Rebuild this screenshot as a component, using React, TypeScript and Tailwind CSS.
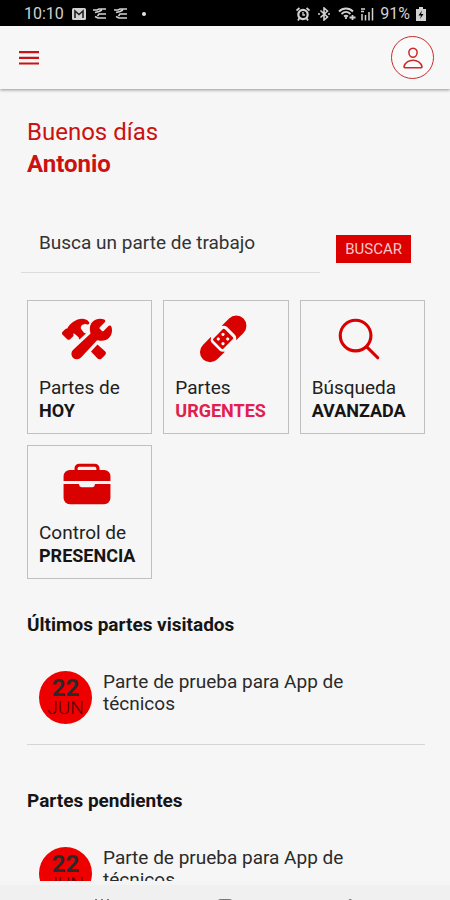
import React from 'react';
import {
    IoBandage,
    IoBriefcase,
    IoConstruct,
    IoPersonOutline,
    IoSearchOutline,
} from 'react-icons/io5';

interface Shortcut {
    id: string;
    icon: React.ReactNode;
    label: string;
    strong: string;
    urgent?: boolean;
}

interface WorkOrder {
    day: string;
    month: string;
    title: string;
}

const shortcuts: Shortcut[] = [
    { id: 'today', icon: <IoConstruct />, label: 'Partes de', strong: 'HOY' },
    { id: 'urgent', icon: <IoBandage />, label: 'Partes', strong: 'URGENTES', urgent: true },
    { id: 'search', icon: <IoSearchOutline />, label: 'Búsqueda', strong: 'AVANZADA' },
    { id: 'presence', icon: <IoBriefcase />, label: 'Control de', strong: 'PRESENCIA' },
];

const visited: WorkOrder[] = [
    { day: '22', month: 'JUN', title: 'Parte de prueba para App de técnicos' },
];

const pending: WorkOrder[] = [
    { day: '22', month: 'JUN', title: 'Parte de prueba para App de técnicos' },
];

const TransferIcon: React.FC = () => (
    <svg viewBox="0 0 15 14" className="h-3.5 w-[15px]" fill="none" stroke="currentColor" strokeWidth="1.6">
        <path d="M1 3h4l2-1h7M3 5.500l4-1 3-1.500M14 7H7L5.500 9M3 9.500l3 1.500h8" />
    </svg>
);

const StatusBar: React.FC = () => (
    <div className="flex h-[26px] shrink-0 items-center justify-between bg-black px-6 pt-0.5 text-base text-[#d2d2d2]">
        <div className="flex items-center gap-1.5">
            <span className="mr-0.5">10:10</span>
            <svg viewBox="0 0 14 12" className="h-3 w-3.5">
                <rect width="14" height="12" rx="1.500" fill="#d2d2d2" />
                <path d="M3 10V3l4 3.500L11 3v7" fill="none" stroke="#222" strokeWidth="1.600" />
            </svg>
            <TransferIcon />
            <TransferIcon />
            <span className="ml-2 size-1 rounded-full bg-[#e4e4e4]" />
        </div>
        <div className="flex items-center gap-1">
            <svg viewBox="0 0 14 14" className="mr-1 size-3.5" fill="none" stroke="currentColor">
                <circle cx="7" cy="7.500" r="4.700" strokeWidth="2.200" />
                <path d="M0.500 3.500L3.500 1M13.500 3.500L10.500 1M3.500 11L2 13.500M10.500 11L12 13.500" strokeWidth="1.800" />
                <path d="M7 5v3h2" strokeWidth="1.300" />
            </svg>
            <svg viewBox="0 0 12 14" className="mr-1 h-3.5 w-3" fill="none" stroke="currentColor" strokeWidth="1.600">
                <path d="M2.500 3.500l7 6.500L6 13V1l3.500 3-7 6.500" />
                <path d="M0 7h2M10 7h2" />
            </svg>
            <svg viewBox="0 0 18 16" className="h-4 w-[18px]" fill="none" stroke="currentColor" strokeWidth="1.800">
                <path d="M1 5.500C5 1.500 11 1.500 15 5.500M3.500 8C6.500 5.200 9.500 5.200 12.500 8M6 10.500c1.500-1.200 2.500-1.200 4 0" />
                <path d="M8 11v2M11.500 11.500h6M14.500 9v5" />
            </svg>
            <svg viewBox="0 0 14 14" className="size-3.5" fill="none" stroke="currentColor" strokeWidth="1.500">
                <path d="M2 7v6.500M5.500 8v5.500M9 5v8.500M12.500 1v12.500M1 2h4M1 4.500h3" />
            </svg>
            <span className="mx-0.5">91%</span>
            <svg viewBox="0 0 10 14" className="h-3.5 w-2.5">
                <path d="M3 0h4v2h3v12H0V2h3z" fill="currentColor" />
                <path d="M6 3.500L2.500 8.500H5L4 12l3.500-5H5z" fill="#000" />
            </svg>
        </div>
    </div>
);

const Header: React.FC = () => (
    <header className="z-10 flex h-[63px] shrink-0 items-center justify-between bg-[#f7f7f7] pr-4 pl-[19px] shadow-[0_1px_3px_rgba(0,0,0,0.4)]">
        <button type="button" aria-label="Menú" className="text-[#c81414]">
            <svg viewBox="0 0 20 14" className="h-3.5 w-5" fill="currentColor">
                <path d="M0 0h20v2.200H0zM0 5.700h20v2.200H0zM0 11.400h20v2.200H0z" />
            </svg>
        </button>
        <button
            type="button"
            aria-label="Perfil"
            className="flex size-[43px] items-center justify-center rounded-full border border-[#c92a2a] bg-[#fafafa] text-[#c92a2a]"
        >
            <IoPersonOutline className="size-6" />
        </button>
    </header>
);

const ShortcutCard: React.FC<{ item: Shortcut }> = ({ item }) => (
    <button type="button" className="border border-[#c0c0c0] px-[11px] pt-[13px] pb-[11px] text-left text-[#222]">
        <span className="mb-3 flex justify-center pr-1.5 text-[50px] text-[#d90000]">{item.icon}</span>
        <span className="block text-[19px] leading-[23px]">{item.label}</span>
        <span
            className={`block text-lg leading-[23px] font-bold ${item.urgent ? 'text-[#e0204f]' : 'text-[#151515]'}`}
        >
            {item.strong}
        </span>
    </button>
);

const OrderSection: React.FC<{ title: string; orders: WorkOrder[] }> = ({ title, orders }) => (
    <section className="mb-11">
        <h2 className="mb-[34px] text-[19px] leading-6 font-bold text-[#151515]">{title}</h2>
        {orders.map((order, index) => (
            <a
                key={index}
                href="#parte"
                className="flex items-start gap-[11px] border-b border-[#d5d5d5] pb-5 pl-3 text-[#2a2a2a]"
            >
                <span className="flex size-[53px] shrink-0 flex-col items-center justify-center rounded-full bg-[#ee0000]">
                    <span className="text-2xl leading-5 font-bold">{order.day}</span>
                    <span className="text-[19px] leading-5 font-light text-[#4a0808]">{order.month}</span>
                </span>
                <span className="max-w-[260px] text-[19px] leading-[22px]">{order.title}</span>
            </a>
        ))}
    </section>
);

const App: React.FC = () => {
    return (
        <div className="flex h-screen flex-col bg-[#f6f6f6] font-[Roboto,sans-serif]">
            <StatusBar />
            <Header />
            <main className="min-h-0 flex-1 overflow-y-auto pt-[27px] pr-[25px] pl-[27px] [scrollbar-width:none]">
                <h1 className="text-2xl leading-8 text-[#cc1111]">
                    Buenos días
                    <strong className="block font-bold">Antonio</strong>
                </h1>

                <form className="mt-8 -ml-1.5 flex items-end gap-4" onSubmit={e => e.preventDefault()}>
                    <input
                        type="search"
                        aria-label="Busca un parte de trabajo"
                        placeholder="Busca un parte de trabajo"
                        className="h-[61px] min-w-0 flex-1 border-b border-[#dcdcdc] pl-[18px] text-[19px] text-[#333] outline-none placeholder:text-[#333]"
                    />
                    <button type="submit" className="mr-3.5 mb-2.5 h-7 bg-[#dc0000] px-[9px] text-[15px] text-[#f8c8c8]">
                        BUSCAR
                    </button>
                </form>

                <div className="mt-[27px] mb-[34px] grid grid-cols-3 gap-[11px]">
                    {shortcuts.map(item => (
                        <ShortcutCard key={item.id} item={item} />
                    ))}
                </div>

                <OrderSection title="Últimos partes visitados" orders={visited} />
                <OrderSection title="Partes pendientes" orders={pending} />
            </main>

            <nav className="flex h-[19px] shrink-0 items-start justify-around overflow-hidden border-t-4 border-[#f4f4f4] bg-[#f0f0f0] px-10 pt-3.5 text-[#777]">
                <button type="button" aria-label="Recientes">
                    <svg viewBox="0 0 16 16" className="size-4" stroke="currentColor" strokeWidth="2">
                        <path d="M2 0v16M8 0v16M14 0v16" />
                    </svg>
                </button>
                <button type="button" aria-label="Inicio">
                    <svg viewBox="0 0 16 16" className="size-4" fill="none" stroke="currentColor" strokeWidth="2">
                        <rect x="1" y="1" width="14" height="14" rx="3" />
                    </svg>
                </button>
                <button type="button" aria-label="Atrás">
                    <svg viewBox="0 0 16 16" className="size-4" fill="none" stroke="currentColor" strokeWidth="2">
                        <path d="M11 0L3 8l8 8" />
                    </svg>
                </button>
            </nav>
        </div>
    );
};

export default App;
